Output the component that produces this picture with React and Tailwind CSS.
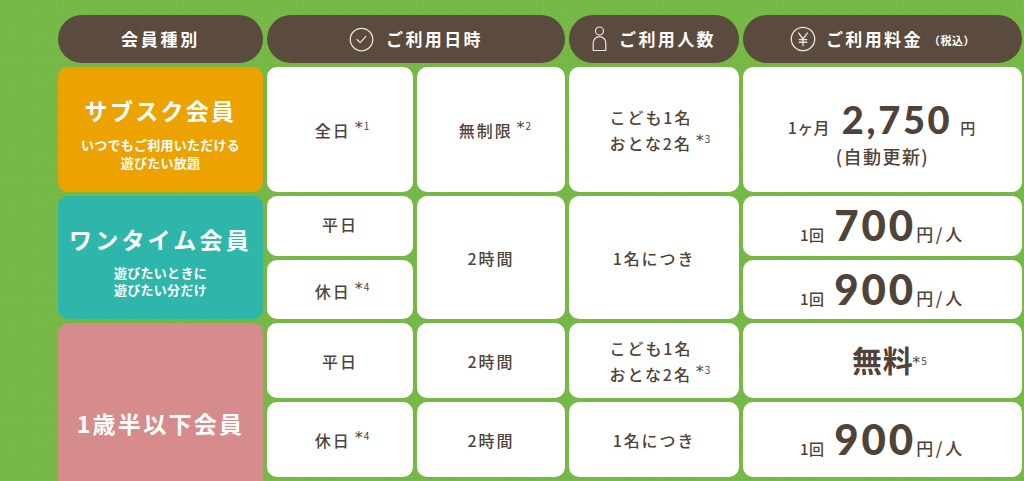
import React from "react";

const JP = { fontFamily: '"Noto Sans CJK JP", "Noto Sans", sans-serif' };
const NUM = { fontFamily: 'Lato, "Noto Sans CJK JP", sans-serif' };
const AST = { fontFamily: '"DejaVu Sans", sans-serif' };

function CheckIcon() {
  return (
    <svg width="25" height="25" viewBox="0 0 24 24" fill="none" stroke="#ece3d8" strokeWidth="1.2" strokeLinecap="round" strokeLinejoin="round">
      <circle cx="12" cy="12" r="10.8" />
      <path d="M7.8 12.2l3 2.8 5.4-6" />
    </svg>
  );
}

function PersonIcon() {
  return (
    <svg width="15" height="26" viewBox="0 0 15 26" fill="none" stroke="#ece3d8" strokeWidth="1.2" strokeLinejoin="round">
      <circle cx="7.5" cy="5" r="4" />
      <path d="M1.2 24.5V17a6.3 6.3 0 0 1 12.6 0v7.5z" />
    </svg>
  );
}

function YenIcon() {
  return (
    <svg width="26" height="26" viewBox="0 0 24 24" fill="none" stroke="#ece3d8" strokeWidth="1.2" strokeLinecap="round" strokeLinejoin="round">
      <circle cx="12" cy="12" r="10.8" />
      <path d="M8 6.5l4 5.5 4-5.5M12 12v6M8.5 12.5h7M8.5 15h7" />
    </svg>
  );
}

function Note({ n, gap = "ml-[4px]" }) {
  return (
    <span className="tracking-normal font-normal whitespace-nowrap">
      <span style={AST} className={`relative -top-[4px] ${gap} text-[16px] leading-none`}>*</span>
      <span className="relative -top-[7px] ml-[1px] text-[10px] leading-none">{n}</span>
    </span>
  );
}

function Head({ className = "", children }) {
  return (
    <div className={`bg-[#5b4a3e] rounded-full flex items-center justify-center text-white font-bold ${className}`}>
      {children}
    </div>
  );
}

function Cell({ className = "", children }) {
  return (
    <div className={`bg-white rounded-[10px] flex flex-col items-center justify-center text-[#4f4339] text-[16px] tracking-[0.12em] font-medium leading-[26px] ${className}`}>
      {children}
    </div>
  );
}

function Price({ amount }) {
  return (
    <div className="flex items-baseline">
      <span className="text-[15px] font-medium tracking-[0.02em]">1回</span>
      <span style={NUM} className="ml-[10px] text-[42px] font-black leading-none tracking-[0.07em]">{amount}</span>
      <span className="text-[17px] font-medium tracking-[0.16em]">円/人</span>
    </div>
  );
}

export default function App() {
  return (
    <div
      style={JP}
      className="w-[1024px] h-[481px] overflow-hidden bg-[#77b946] bg-[radial-gradient(#70b140_0.8px,transparent_1px),radial-gradient(#80c04f_0.8px,transparent_1px)] bg-[size:3px_3px,5px_5px] pl-[58px] pt-[15px]"
    >
      <div className="grid grid-cols-[205px_146px_148px_170px_279px] grid-rows-[48px_125px_60px_59px_75px_75px_46px] gap-x-[4px] gap-y-[4px]">
        {/* header */}
        <Head className="col-start-1 row-start-1 text-[17px] tracking-[0.16em]">会員種別</Head>
        <Head className="col-start-2 col-span-2 row-start-1 gap-[12px]">
          <CheckIcon />
          <span className="text-[17px] tracking-[0.14em]">ご利用日時</span>
        </Head>
        <Head className="col-start-4 row-start-1 gap-[12px]">
          <PersonIcon />
          <span className="text-[17px] tracking-[0.14em]">ご利用人数</span>
        </Head>
        <Head className="col-start-5 row-start-1 gap-[10px]">
          <YenIcon />
          <span className="text-[17px] tracking-[0.14em]">ご利用料金</span>
          <span className="text-[11px] tracking-[0.05em] -ml-[4px] mt-[3px]">（税込）</span>
        </Head>

        {/* row 1: subscription */}
        <div className="col-start-1 row-start-2 bg-[#eca200] rounded-[10px] flex flex-col items-center justify-center text-white font-bold pt-[8px]">
          <div className="text-[23px] tracking-[0.1em] leading-[30px]">サブスク会員</div>
          <div className="text-[13px] leading-[18px] mt-[11px] tracking-[0.02em]">いつでもご利用いただける</div>
          <div className="text-[13px] leading-[18px] tracking-[0.02em]">遊びたい放題</div>
        </div>
        <Cell className="col-start-2 row-start-2">
          <div className="ml-[4px]">全日<Note n="1" /></div>
        </Cell>
        <Cell className="col-start-3 row-start-2">
          <div className="ml-[8px]">無制限<Note n="2" /></div>
        </Cell>
        <Cell className="col-start-4 row-start-2">
          <div className="items-start flex flex-col ml-[12px]">
            <div>こども1名</div>
            <div>おとな2名<Note n="3" /></div>
          </div>
        </Cell>
        <Cell className="col-start-5 row-start-2 pt-[10px]">
          <div className="flex items-baseline">
            <span className="text-[16px] tracking-[0.02em]">1ヶ月</span>
            <span style={NUM} className="ml-[12px] text-[38px] font-black leading-none tracking-[0.07em]">2,750</span>
            <span className="ml-[8px] text-[15px]">円</span>
          </div>
          <div className="text-[18px] mt-[2px] tracking-[0.08em]">(自動更新)</div>
        </Cell>

        {/* row 2: one-time */}
        <div className="col-start-1 row-start-3 row-span-2 bg-[#2fb6aa] rounded-[10px] flex flex-col items-center justify-center text-white font-bold pt-[6px]">
          <div className="text-[23px] tracking-[0.14em] leading-[30px]">ワンタイム会員</div>
          <div className="text-[13px] leading-[17px] mt-[10px] tracking-[0.02em]">遊びたいときに</div>
          <div className="text-[13px] leading-[17px] tracking-[0.02em]">遊びたい分だけ</div>
        </div>
        <Cell className="col-start-2 row-start-3 pb-[4px]">平日</Cell>
        <Cell className="col-start-2 row-start-4 pt-[2px]">
          <div className="ml-[4px]">休日<Note n="4" /></div>
        </Cell>
        <Cell className="col-start-3 row-start-3 row-span-2">2時間</Cell>
        <Cell className="col-start-4 row-start-3 row-span-2">1名につき</Cell>
        <Cell className="col-start-5 row-start-3">
          <Price amount="700" />
        </Cell>
        <Cell className="col-start-5 row-start-4">
          <Price amount="900" />
        </Cell>

        {/* row 3: under 1.5 years */}
        <div className="col-start-1 row-start-5 row-span-3 bg-[#d68b8d] rounded-[10px] flex flex-col items-center justify-center text-white font-bold">
          <div className="text-[23px] tracking-[0.1em] leading-[30px] -mt-[4px]">1歳半以下会員</div>
        </div>
        <Cell className="col-start-2 row-start-5">平日</Cell>
        <Cell className="col-start-2 row-start-6">
          <div className="ml-[4px]">休日<Note n="4" /></div>
        </Cell>
        <Cell className="col-start-3 row-start-5">2時間</Cell>
        <Cell className="col-start-3 row-start-6">2時間</Cell>
        <Cell className="col-start-4 row-start-5">
          <div className="items-start flex flex-col ml-[12px]">
            <div>こども1名</div>
            <div>おとな2名<Note n="3" /></div>
          </div>
        </Cell>
        <Cell className="col-start-4 row-start-6">1名につき</Cell>
        <Cell className="col-start-5 row-start-5">
          <div className="text-[30px] font-bold tracking-[0.02em] ml-[14px]">無料<Note n="5" gap="-ml-[1px]" /></div>
        </Cell>
        <Cell className="col-start-5 row-start-6">
          <Price amount="900" />
        </Cell>
        <Cell className="col-start-2 row-start-7" />
        <Cell className="col-start-3 row-start-7" />
        <Cell className="col-start-4 row-start-7" />
        <Cell className="col-start-5 row-start-7" />
      </div>
    </div>
  );
}
